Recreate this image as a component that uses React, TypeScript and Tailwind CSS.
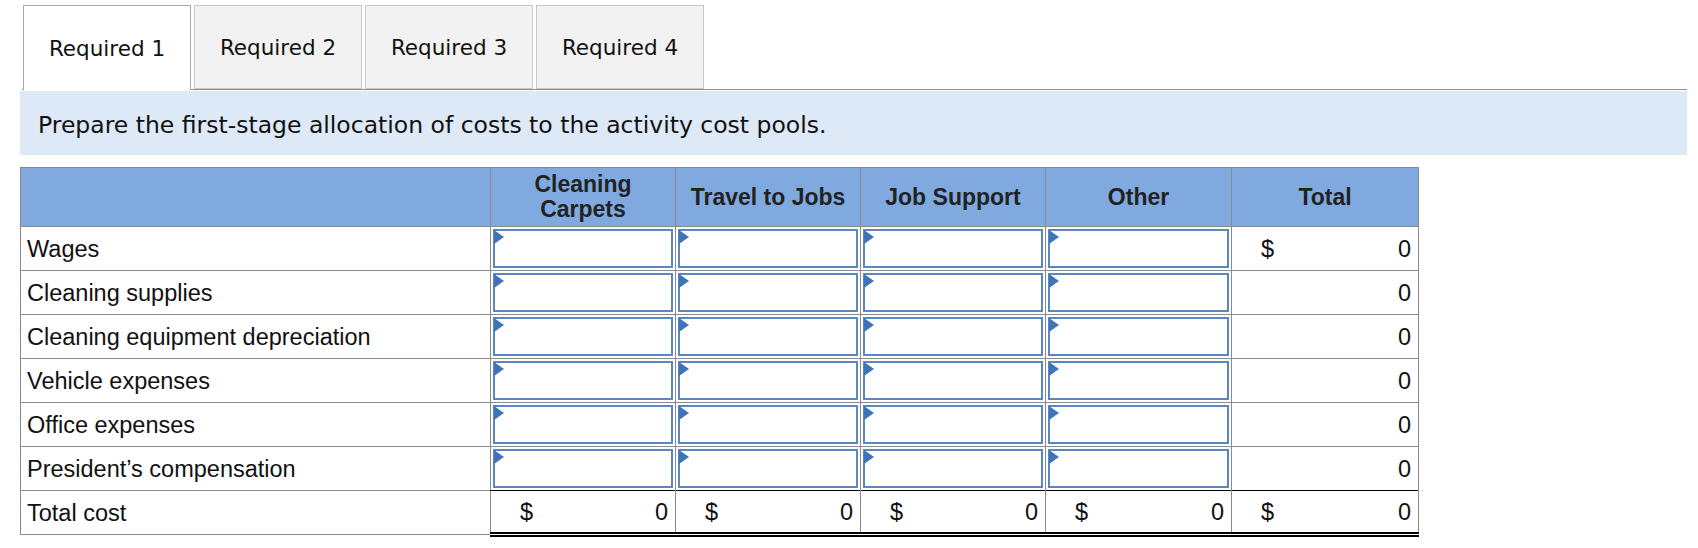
import React from 'react'

const tabs = ['Required 1', 'Required 2', 'Required 3', 'Required 4']

const columns = ['Cleaning Carpets', 'Travel to Jobs', 'Job Support', 'Other']

const rows = [
  'Wages',
  'Cleaning supplies',
  'Cleaning equipment depreciation',
  'Vehicle expenses',
  'Office expenses',
  'President\u2019s compensation',
]

function InputCell() {
  return (
    <td className="border border-[#8a8a8a] p-[2px] h-[44px]">
      <div className="relative h-full w-full border-2 border-[#5a86c2] bg-white">
        <span className="absolute -left-px -top-px h-0 w-0 border-y-[7px] border-l-[10px] border-y-transparent border-l-[#3f74b8]" />
      </div>
    </td>
  )
}

function MoneyCell({ dollar, total }: { dollar?: boolean; total?: boolean }) {
  return (
    <td
      className={
        total
          ? 'border-x border-[#8a8a8a] border-t border-t-black border-b-[5px] border-b-black border-double h-[44px] px-[7px]'
          : 'border border-[#8a8a8a] h-[44px] px-[7px]'
      }
    >
      <div className="flex items-center justify-between pt-[2px]">
        <span className="pl-[22px]">{dollar ? '$' : ''}</span>
        <span>0</span>
      </div>
    </td>
  )
}

export default function App() {
  return (
    <div className="w-[1698px] h-[548px] bg-white text-[#111]">
      <div className="pl-[23px] pt-[5px] flex gap-[3px] font-['DejaVu_Sans',sans-serif] text-[21.5px]">
        {tabs.map((t, i) => (
          <div
            key={t}
            className={
              i === 0
                ? 'w-[168px] h-[85px] pt-[2px] flex items-center justify-center bg-white border border-b-0 border-[#a8a8a8] relative -mb-px z-10'
                : 'w-[168px] h-[84px] pt-[2px] flex items-center justify-center bg-[#f2f2f2] border border-[#c8c8c8]'
            }
          >
            {t}
          </div>
        ))}
      </div>
      <div className="ml-[22px] w-[1665px] border-t border-[#8f8f8f]" />
      <div className="ml-[20px] mt-px w-[1667px] h-[64px] bg-[#dde9f7] flex items-center pl-[18px] pt-[5px] font-['DejaVu_Sans',sans-serif] text-[23.5px]">
        Prepare the first-stage allocation of costs to the activity cost pools.
      </div>
      <div className="ml-[20px] mt-[12px] font-['Liberation_Sans',Arial,sans-serif] text-[23.5px]">
        <table className="border-collapse table-fixed w-[1398px]">
          <colgroup>
            <col className="w-[470px]" />
            <col className="w-[185px]" />
            <col className="w-[185px]" />
            <col className="w-[185px]" />
            <col className="w-[186px]" />
            <col className="w-[187px]" />
          </colgroup>
          <thead>
            <tr className="bg-[#80aadf] h-[59px]">
              <th className="border border-[#8a8a8a]" />
              {columns.map((c) => (
                <th
                  key={c}
                  className="border border-[#8a8a8a] font-bold text-[23px] leading-[25px] text-[#222] px-1"
                >
                  {c === 'Cleaning Carpets' ? (
                    <>
                      Cleaning
                      <br />
                      Carpets
                    </>
                  ) : (
                    c
                  )}
                </th>
              ))}
              <th className="border border-[#8a8a8a] font-bold text-[23px] text-[#222]">Total</th>
            </tr>
          </thead>
          <tbody>
            {rows.map((r, i) => (
              <tr key={r}>
                <td className="border border-[#8a8a8a] px-[6px] pt-[2px] h-[44px] text-left">{r}</td>
                {columns.map((c) => (
                  <InputCell key={c} />
                ))}
                <MoneyCell dollar={i === 0} />
              </tr>
            ))}
            <tr>
              <td className="border border-[#8a8a8a] px-[6px] pt-[2px] h-[44px]">Total cost</td>
              {columns.map((c) => (
                <MoneyCell key={c} dollar total />
              ))}
              <MoneyCell dollar total />
            </tr>
          </tbody>
        </table>
      </div>
    </div>
  )
}
